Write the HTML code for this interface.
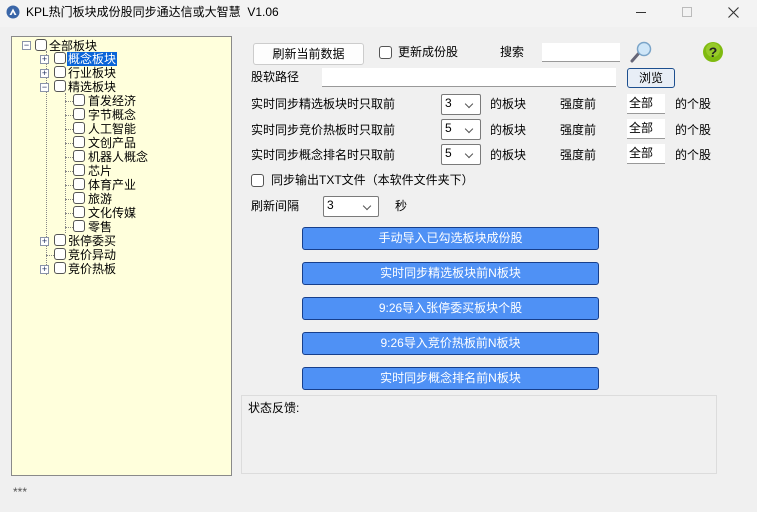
<!DOCTYPE html>
<html><head><meta charset="utf-8"><style>
*{margin:0;padding:0;box-sizing:border-box}
body{width:757px;height:512px;background:#f0f0f0;font-family:"Liberation Sans","Noto Sans CJK SC","WenQuanYi Zen Hei",sans-serif;font-size:12px;color:#000;position:relative;overflow:hidden}
.a{position:absolute;white-space:nowrap;line-height:14px}
.tree{position:absolute;left:11px;top:36px;width:221px;height:440px;background:#ffffdc;border:1px solid #8a8a8a}
.cb{position:absolute;width:12px;height:12px;border:1px solid #555;border-radius:3px;background:#fff}
.pm{position:absolute;width:9px;height:9px;border:1px solid #8a93a8;background:#fff;font-size:9px;line-height:7px;text-align:center;color:#203060}
.btn{position:absolute;left:302px;width:297px;height:23px;background:#4f91f5;border:1px solid #173f8c;border-radius:3px;color:#fff;text-align:center;line-height:21px;font-size:12px}
.in{position:absolute;background:#fff;border-bottom:1px solid #999}
.sel{position:absolute;width:40px;height:21px;background:#fff;border:1px solid #7a7a7a;border-radius:2px;font-size:12px;padding-left:3px;line-height:17px}
.sel:after{content:"";position:absolute;right:8px;top:6px;width:5px;height:5px;border-right:1px solid #555;border-bottom:1px solid #555;transform:rotate(45deg)}
.dl{position:absolute;border-left:1px dotted #888}
.dh{position:absolute;border-top:1px dotted #888;width:8px}
</style></head><body>
<div class="a" style="left:0;top:0;width:757px;height:27px;background:#f3f3f3"></div>
<svg class="a" style="left:6px;top:5px" width="14" height="14"><circle cx="7" cy="7" r="6.5" fill="#3a66a8"/><path d="M3.5 10 L7 3.5 L10.5 10 Z" fill="#fff"/><path d="M5.5 10 L7 7 L8.5 10Z" fill="#3a66a8"/></svg>
<div class="a" style="left:26px;top:5px;font-size:12px">KPL热门板块成份股同步通达信或大智慧&nbsp; V1.06</div>
<div class="a" style="left:636px;top:12px;width:10px;border-top:1px solid #333"></div>
<div class="a" style="left:682px;top:7px;width:10px;height:10px;border:1px solid #bbb"></div>
<svg class="a" style="left:728px;top:7px" width="11" height="11"><path d="M0.5 0.5 L10.5 10.5 M10.5 0.5 L0.5 10.5" stroke="#333" stroke-width="1.1"/></svg>

<div class="tree">
<div class="dl" style="left:34px;top:14px;height:224px"></div>
<div class="dl" style="left:53px;top:56px;height:140px"></div>
<div class="pm" style="left:10px;top:4px">−</div><div class="cb" style="left:23px;top:2px"></div><div class="a" style="left:37px;top:2px">全部板块</div>
</div>
<div class="pm" style="left:40px;top:55px">+</div><div class="cb" style="left:54px;top:52px"></div><div class="a" style="left:67px;top:52px;background:#0a64d8;color:#fff;padding:0 1px">概念板块</div>
<div class="pm" style="left:40px;top:69px">+</div><div class="cb" style="left:54px;top:66px"></div><div class="a" style="left:68px;top:66px">行业板块</div>
<div class="pm" style="left:40px;top:83px;line-height:6px">−</div><div class="cb" style="left:54px;top:80px"></div><div class="a" style="left:68px;top:80px">精选板块</div>
<div class="dh" style="left:65px;top:101px"></div><div class="cb" style="left:73px;top:94px"></div><div class="a" style="left:88px;top:94px">首发经济</div>
<div class="dh" style="left:65px;top:115px"></div><div class="cb" style="left:73px;top:108px"></div><div class="a" style="left:88px;top:108px">字节概念</div>
<div class="dh" style="left:65px;top:129px"></div><div class="cb" style="left:73px;top:122px"></div><div class="a" style="left:88px;top:122px">人工智能</div>
<div class="dh" style="left:65px;top:143px"></div><div class="cb" style="left:73px;top:136px"></div><div class="a" style="left:88px;top:136px">文创产品</div>
<div class="dh" style="left:65px;top:157px"></div><div class="cb" style="left:73px;top:150px"></div><div class="a" style="left:88px;top:150px">机器人概念</div>
<div class="dh" style="left:65px;top:171px"></div><div class="cb" style="left:73px;top:164px"></div><div class="a" style="left:88px;top:164px">芯片</div>
<div class="dh" style="left:65px;top:185px"></div><div class="cb" style="left:73px;top:178px"></div><div class="a" style="left:88px;top:178px">体育产业</div>
<div class="dh" style="left:65px;top:199px"></div><div class="cb" style="left:73px;top:192px"></div><div class="a" style="left:88px;top:192px">旅游</div>
<div class="dh" style="left:65px;top:213px"></div><div class="cb" style="left:73px;top:206px"></div><div class="a" style="left:88px;top:206px">文化传媒</div>
<div class="dh" style="left:65px;top:227px"></div><div class="cb" style="left:73px;top:220px"></div><div class="a" style="left:88px;top:220px">零售</div>
<div class="pm" style="left:40px;top:237px">+</div><div class="cb" style="left:54px;top:234px"></div><div class="a" style="left:68px;top:234px">张停委买</div>
<div class="dh" style="left:46px;top:255px"></div><div class="cb" style="left:54px;top:248px"></div><div class="a" style="left:68px;top:248px">竞价异动</div>
<div class="pm" style="left:40px;top:265px">+</div><div class="cb" style="left:54px;top:262px"></div><div class="a" style="left:68px;top:262px">竞价热板</div>

<div class="a" style="left:13px;top:485px;color:#555">***</div>

<div class="a" style="left:253px;top:43px;width:111px;height:22px;background:#fdfdfd;border:1px solid #ccc;border-radius:3px;text-align:center;line-height:20px">刷新当前数据</div>
<div class="cb" style="left:379px;top:46px;width:13px;height:13px"></div><div class="a" style="left:398px;top:45px">更新成份股</div>
<div class="a" style="left:500px;top:45px">搜索</div>
<div class="in" style="left:542px;top:43px;width:78px;height:19px"></div>
<svg class="a" style="left:629px;top:40px" width="24" height="24"><line x1="3" y1="21" x2="10" y2="13" stroke="#667" stroke-width="3" stroke-linecap="round"/><circle cx="15" cy="9" r="6.5" fill="#cfe6f8" stroke="#7aa4c8" stroke-width="1.5"/></svg>
<svg class="a" style="left:702px;top:41px" width="22" height="22"><circle cx="11" cy="11" r="10" fill="#7fba10"/><circle cx="11" cy="9" r="7" fill="#a6d63a" opacity=".6"/><text x="11" y="16" font-size="14" font-weight="bold" text-anchor="middle" fill="#222" font-family="Liberation Sans">?</text></svg>
<div class="a" style="left:251px;top:70px">股软路径</div>
<div class="in" style="left:322px;top:68px;width:294px;height:19px"></div>
<div class="a" style="left:627px;top:68px;width:48px;height:20px;border:1px solid #1d4f8f;border-radius:3px;background:#e8eef6;text-align:center;line-height:18px">浏览</div>

<div class="a" style="left:251px;top:97px">实时同步精选板块时只取前</div>
<div class="sel" style="left:441px;top:94px">3</div>
<div class="a" style="left:490px;top:97px">的板块</div><div class="a" style="left:560px;top:97px">强度前</div>
<div class="in" style="left:627px;top:94px;width:38px;height:20px;padding-left:2px">全部</div><div class="a" style="left:675px;top:97px">的个股</div>

<div class="a" style="left:251px;top:123px">实时同步竞价热板时只取前</div>
<div class="sel" style="left:441px;top:119px">5</div>
<div class="a" style="left:490px;top:123px">的板块</div><div class="a" style="left:560px;top:123px">强度前</div>
<div class="in" style="left:627px;top:119px;width:38px;height:20px;padding-left:2px">全部</div><div class="a" style="left:675px;top:123px">的个股</div>

<div class="a" style="left:251px;top:148px">实时同步概念排名时只取前</div>
<div class="sel" style="left:441px;top:144px">5</div>
<div class="a" style="left:490px;top:148px">的板块</div><div class="a" style="left:560px;top:148px">强度前</div>
<div class="in" style="left:627px;top:144px;width:38px;height:20px;padding-left:2px">全部</div><div class="a" style="left:675px;top:148px">的个股</div>

<div class="cb" style="left:251px;top:174px;width:13px;height:13px"></div><div class="a" style="left:271px;top:173px">同步输出TXT文件（本软件文件夹下）</div>
<div class="a" style="left:251px;top:199px">刷新间隔</div>
<div class="sel" style="left:323px;top:196px;width:56px">3</div>
<div class="a" style="left:395px;top:199px">秒</div>

<div class="btn" style="top:227px">手动导入已勾选板块成份股</div>
<div class="btn" style="top:262px">实时同步精选板块前N板块</div>
<div class="btn" style="top:297px">9:26导入张停委买板块个股</div>
<div class="btn" style="top:332px">9:26导入竞价热板前N板块</div>
<div class="btn" style="top:367px">实时同步概念排名前N板块</div>

<div class="a" style="left:241px;top:395px;width:476px;height:79px;border:1px solid #dcdcdc"></div>
<div class="a" style="left:248px;top:401px">状态反馈:</div>
</body></html>
